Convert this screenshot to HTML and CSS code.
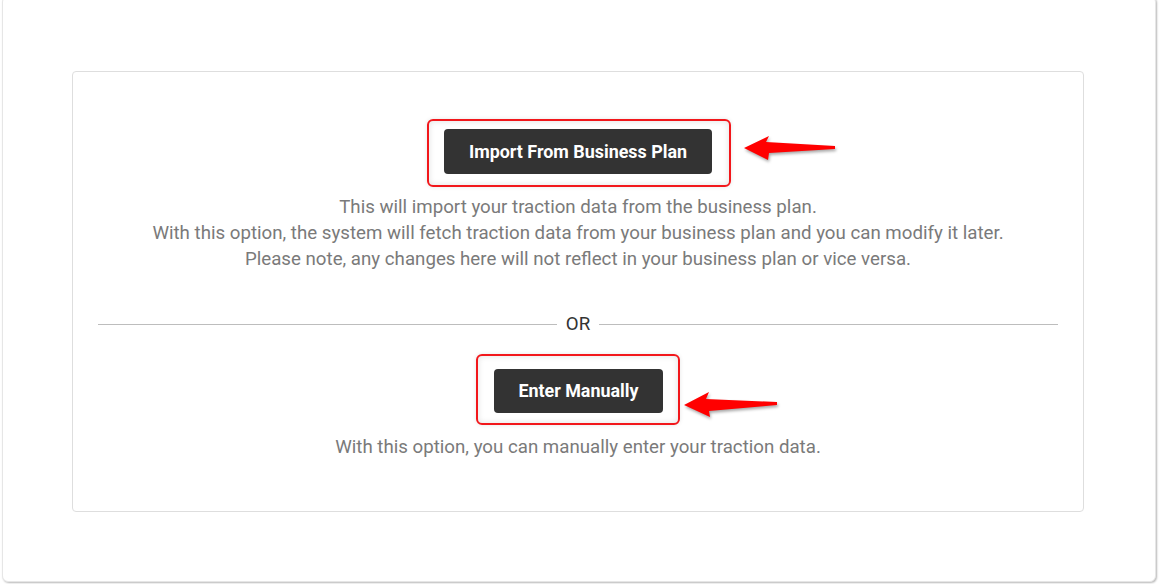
FILE: index.html
```html
<!DOCTYPE html>
<html lang="en">
<head>
<meta charset="utf-8">
<title>Traction data</title>
<link rel="stylesheet" href="styles.css">
</head>
<body>
<div class="panel">
  <div class="card">
    <div class="option option-import">
      <div class="highlight hl-import">
        <button class="btn">Import From Business Plan</button>
        <svg class="arrow arrow-import" width="96" height="28" viewBox="0 0 96 28" aria-hidden="true">
          <polygon points="2,13 27,1 24,7 93,11 93,14 27,18 26,25" />
        </svg>
      </div>
      <p class="desc">This will import your traction data from the business plan.<br>With this option, the system will fetch traction data from your business plan and you can modify it later.<br>Please note, any changes here will not reflect in your business plan or vice versa.</p>
    </div>
    <div class="divider"><span class="line"></span><span class="or">OR</span><span class="line"></span></div>
    <div class="option option-manual">
      <div class="highlight hl-manual">
        <button class="btn">Enter Manually</button>
        <svg class="arrow arrow-manual" width="98" height="28" viewBox="0 0 98 28" aria-hidden="true">
          <polygon points="2,14 27,1 24,8 95,11 95,14 27,20 28,26" />
        </svg>
      </div>
      <p class="desc">With this option, you can manually enter your traction data.</p>
    </div>
  </div>
</div>
</body>
</html>
```

FILE: styles.css
```css
* { box-sizing: border-box; }
html, body { margin: 0; padding: 0; background: #ffffff; }
body {
  font-family: Roboto, "Liberation Sans", Arial, sans-serif;
  width: 1159px;
  height: 584px;
  overflow: hidden;
}
.panel {
  margin: -4px 0 0 2px;
  width: 1154px;
  height: 586px;
  background: #fff;
  border: 1px solid #e6e6e6;
  border-radius: 6px;
  box-shadow: 1px 1px 2px rgba(0,0,0,0.28);
  padding: 74px 0 0 69px;
}
.card {
  width: 1012px;
  height: 441px;
  border: 1px solid #dedede;
  border-radius: 4px;
  padding: 47px 25px 0 25px;
  display: flex;
  flex-direction: column;
  align-items: center;
}
.option {
  display: flex;
  flex-direction: column;
  align-items: center;
}
.highlight {
  position: relative;
  border: 2px solid #f2171b;
  border-radius: 6px;
  box-shadow: inset 0 0 6px rgba(0,0,0,0.12), 0 0 4px rgba(0,0,0,0.10);
}
.hl-import {
  padding: 8px 17px 11px 15px;
  margin-left: 2px;
}
.hl-manual {
  padding: 13px 15px 10px 16px;
}
.btn {
  display: block;
  background: #333333;
  color: #ffffff;
  border: 0;
  border-radius: 4px;
  font-family: Roboto, "Liberation Sans", Arial, sans-serif;
  font-weight: 700;
  font-size: 17.9px;
  line-height: 20px;
  cursor: pointer;
}
.hl-import .btn { width: 268px; height: 45px; padding: 0; }
.hl-manual .btn { width: 169px; height: 44px; padding: 0; }
.arrow {
  position: absolute;
  fill: #ff0000;
  filter: drop-shadow(1px 2px 1.5px rgba(0,0,0,0.35));
}
.arrow-import { left: 313px; top: 14px; }
.arrow-manual { left: 204px; top: 35px; }
.desc {
  margin: 7px 0 0 0;
  color: #7a7a7a;
  font-size: 18.7px;
  line-height: 26px;
  text-align: center;
}
.option-manual .desc { margin-top: 9px; }
.divider {
  width: 100%;
  display: flex;
  align-items: center;
  gap: 9px;
  margin: 41px 0 19px 0;
}
.line {
  flex: 1;
  height: 1px;
  background: #bdbdbd;
}
.or {
  color: #333333;
  font-size: 18.7px;
  line-height: 22px;
}
```
